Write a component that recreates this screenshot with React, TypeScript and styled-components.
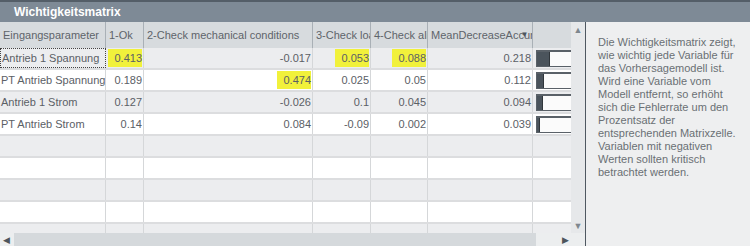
import React from 'react'
import styled, { createGlobalStyle } from 'styled-components';

const GlobalStyle = createGlobalStyle`
  html, body { margin: 0; padding: 0; background: #fff; }
  body { font-family: "Liberation Sans", Arial, sans-serif; }
`;

// column widths of the matrix grid
const cols = [106, 38, 169, 58, 57, 105, 38];
const headers = ['Eingangsparameter', '1-Ok', '2-Check mechanical conditions', '3-Check load', '4-Check alignment', 'MeanDecreaseAccuracy', ''];

type Cell = { v: string; hl?: boolean };
const rows: { name: string; cells: Cell[]; mda: number }[] = [
  { name: 'Antrieb 1 Spannung', cells: [{ v: '0.413', hl: true }, { v: '-0.017' }, { v: '0.053', hl: true }, { v: '0.088', hl: true }, { v: '0.218' }], mda: 0.218 },
  { name: 'PT Antrieb Spannung', cells: [{ v: '0.189' }, { v: '0.474', hl: true }, { v: '0.025' }, { v: '0.05' }, { v: '0.112' }], mda: 0.112 },
  { name: 'Antrieb 1 Strom', cells: [{ v: '0.127' }, { v: '-0.026' }, { v: '0.1' }, { v: '0.045' }, { v: '0.094' }], mda: 0.094 },
  { name: 'PT Antrieb Strom', cells: [{ v: '0.14' }, { v: '0.084' }, { v: '-0.09' }, { v: '0.002' }, { v: '0.039' }], mda: 0.039 },
];
const emptyRows = 5;

const info = `Die Wichtigkeitsmatrix zeigt,
wie wichtig jede Variable für
das Vorhersagemodell ist.
Wird eine Variable vom
Modell entfernt, so erhöht
sich die Fehlerrate um den
Prozentsatz der
entsprechenden Matrixzelle.
Variablen mit negativen
Werten sollten kritisch
betrachtet werden.`;

function App() {
  return (
    <>
      <GlobalStyle />
      <Frame>
        <TitleBar>Wichtigkeitsmatrix</TitleBar>
        <Body>
          <TablePane>
            <GridArea>
              <Grid>
                <HeaderRow>
                  {headers.map((h, i) => (
                    <HeaderCell key={i} $w={cols[i]} $sorted={i === 5}>
                      {h}
                      {i === 5 && <SortArrow>▼</SortArrow>}
                    </HeaderCell>
                  ))}
                </HeaderRow>
                {rows.map((r, ri) => (
                  <Row key={ri} $odd={ri % 2 === 0}>
                    <NameCell $w={cols[0]} $focus={ri === 0}>{r.name}</NameCell>
                    {r.cells.map((c, ci) => (
                      <NumCell key={ci} $w={cols[ci + 1]}>
                        {c.hl ? <Highlight>{c.v}</Highlight> : c.v}
                      </NumCell>
                    ))}
                    <BarCell $w={cols[6]}>
                      <BarBox>
                        <BarFill style={{ width: Math.max(2, Math.round(r.mda * 55)) }} />
                      </BarBox>
                    </BarCell>
                  </Row>
                ))}
                {Array.from({ length: emptyRows }).map((_, i) => (
                  <Row key={'e' + i} $odd={(rows.length + i) % 2 === 0}>
                    {cols.map((w, ci) => (
                      <NumCell key={ci} $w={w} />
                    ))}
                  </Row>
                ))}
              </Grid>
              <VScroll>
                <Arrow>▲</Arrow>
                <Arrow>▼</Arrow>
              </VScroll>
            </GridArea>
            <HScroll>
              <Arrow>◀</Arrow>
              <Thumb />
              <Arrow>▶</Arrow>
            </HScroll>
          </TablePane>
          <InfoPanel>{info}</InfoPanel>
        </Body>
      </Frame>
    </>
  );
}

const Frame = styled.div`
  width: 750px;
  height: 246px;
  display: flex;
  flex-direction: column;
  overflow: hidden;
  background: #fff;
`;

const TitleBar = styled.div`
  height: 20px;
  border-top: 2px solid #545e68;
  background: #7e8a96;
  color: #fff;
  font-weight: bold;
  font-size: 12px;
  line-height: 20px;
  padding-left: 14px;
`;

const Body = styled.div`
  flex: 1;
  display: flex;
  min-height: 0;
`;

const TablePane = styled.div`
  width: 585px;
  display: flex;
  flex-direction: column;
  border-right: 1px solid #4f5861;
`;

const GridArea = styled.div`
  flex: 1;
  display: flex;
  min-height: 0;
`;

const Grid = styled.div`
  width: 571px;
  overflow: hidden;
  font-size: 11px;
  color: #5b6066;
`;

const HeaderRow = styled.div`
  display: flex;
  height: 26px;
  background: #d7dbde;
`;

const HeaderCell = styled.div<{ $w: number; $sorted?: boolean }>`
  position: relative;
  width: ${(p) => p.$w}px;
  flex: none;
  box-sizing: border-box;
  border-right: 1px solid #a9b0b6;
  padding-left: 3px;
  padding-right: ${(p) => (p.$sorted ? '4px' : '0')};
  line-height: 26px;
  white-space: nowrap;
  overflow: hidden;
  color: #5e646a;
  &:last-child { border-right: none; }
`;

const SortArrow = styled.span`
  position: absolute;
  right: 3px;
  top: 0;
  width: 9px;
  text-align: center;
  font-size: 8px;
  color: #4d555c;
`;

const Row = styled.div<{ $odd: boolean }>`
  display: flex;
  height: 20px;
  border-bottom: 2px solid #dcdddf;
  background: ${(p) => (p.$odd ? '#ecedef' : '#ffffff')};
`;

const CellBase = styled.div<{ $w: number }>`
  width: ${(p) => p.$w}px;
  flex: none;
  box-sizing: border-box;
  border-right: 1px solid #d5d7d9;
  line-height: 20px;
  white-space: nowrap;
  overflow: hidden;
  &:last-child { border-right: none; }
`;

const NameCell = styled(CellBase)<{ $focus: boolean }>`
  padding-left: 1px;
  border: ${(p) => (p.$focus ? '1px dotted #444' : 'none')};
  border-right: 1px ${(p) => (p.$focus ? 'dotted #444' : 'solid #d5d7d9')};
  line-height: ${(p) => (p.$focus ? '18px' : '20px')};
`;

const NumCell = styled(CellBase)`
  display: flex;
  justify-content: flex-end;
  padding-right: 1px;
`;

const Highlight = styled.span`
  background: #f1f13b;
  padding-left: 6px;
  margin: 1px 0;
  line-height: 18px;
`;

const BarCell = styled(CellBase)`
  display: flex;
  align-items: center;
  padding-left: 3px;
`;

const BarBox = styled.div`
  width: 60px;
  height: 14px;
  flex: none;
  background: #fbfbfb;
  border: 1px solid #5a6168;
  border-top-width: 2px;
  display: flex;
`;

const BarFill = styled.div`
  height: 100%;
  background: #4b545c;
  border-right: 1px solid #30363b;
`;

const VScroll = styled.div`
  width: 14px;
  background: #e6e8ea;
  display: flex;
  flex-direction: column;
  justify-content: space-between;
  align-items: center;
  padding: 3px 0 2px;
`;

const Arrow = styled.span`
  font-size: 9px;
  color: #7f878e;
  line-height: 10px;
`;

const HScroll = styled.div`
  height: 13px;
  display: flex;
  align-items: center;
  background: #eceeef;
  padding: 0 16px 0 3px;
  gap: 4px;
  & > span:last-child { margin-left: auto; color: #4d555c; }
  & > span:first-child { color: #4d555c; }
`;

const Thumb = styled.div`
  width: 522px;
  height: 13px;
  background: #d5d9dc;
`;

const InfoPanel = styled.div`
  flex: 1;
  background: #eeeff0;
  color: #6a6f74;
  font-size: 11px;
  line-height: 13px;
  padding: 14px 0 0 12px;
  white-space: pre-line;
`;

export default App;
